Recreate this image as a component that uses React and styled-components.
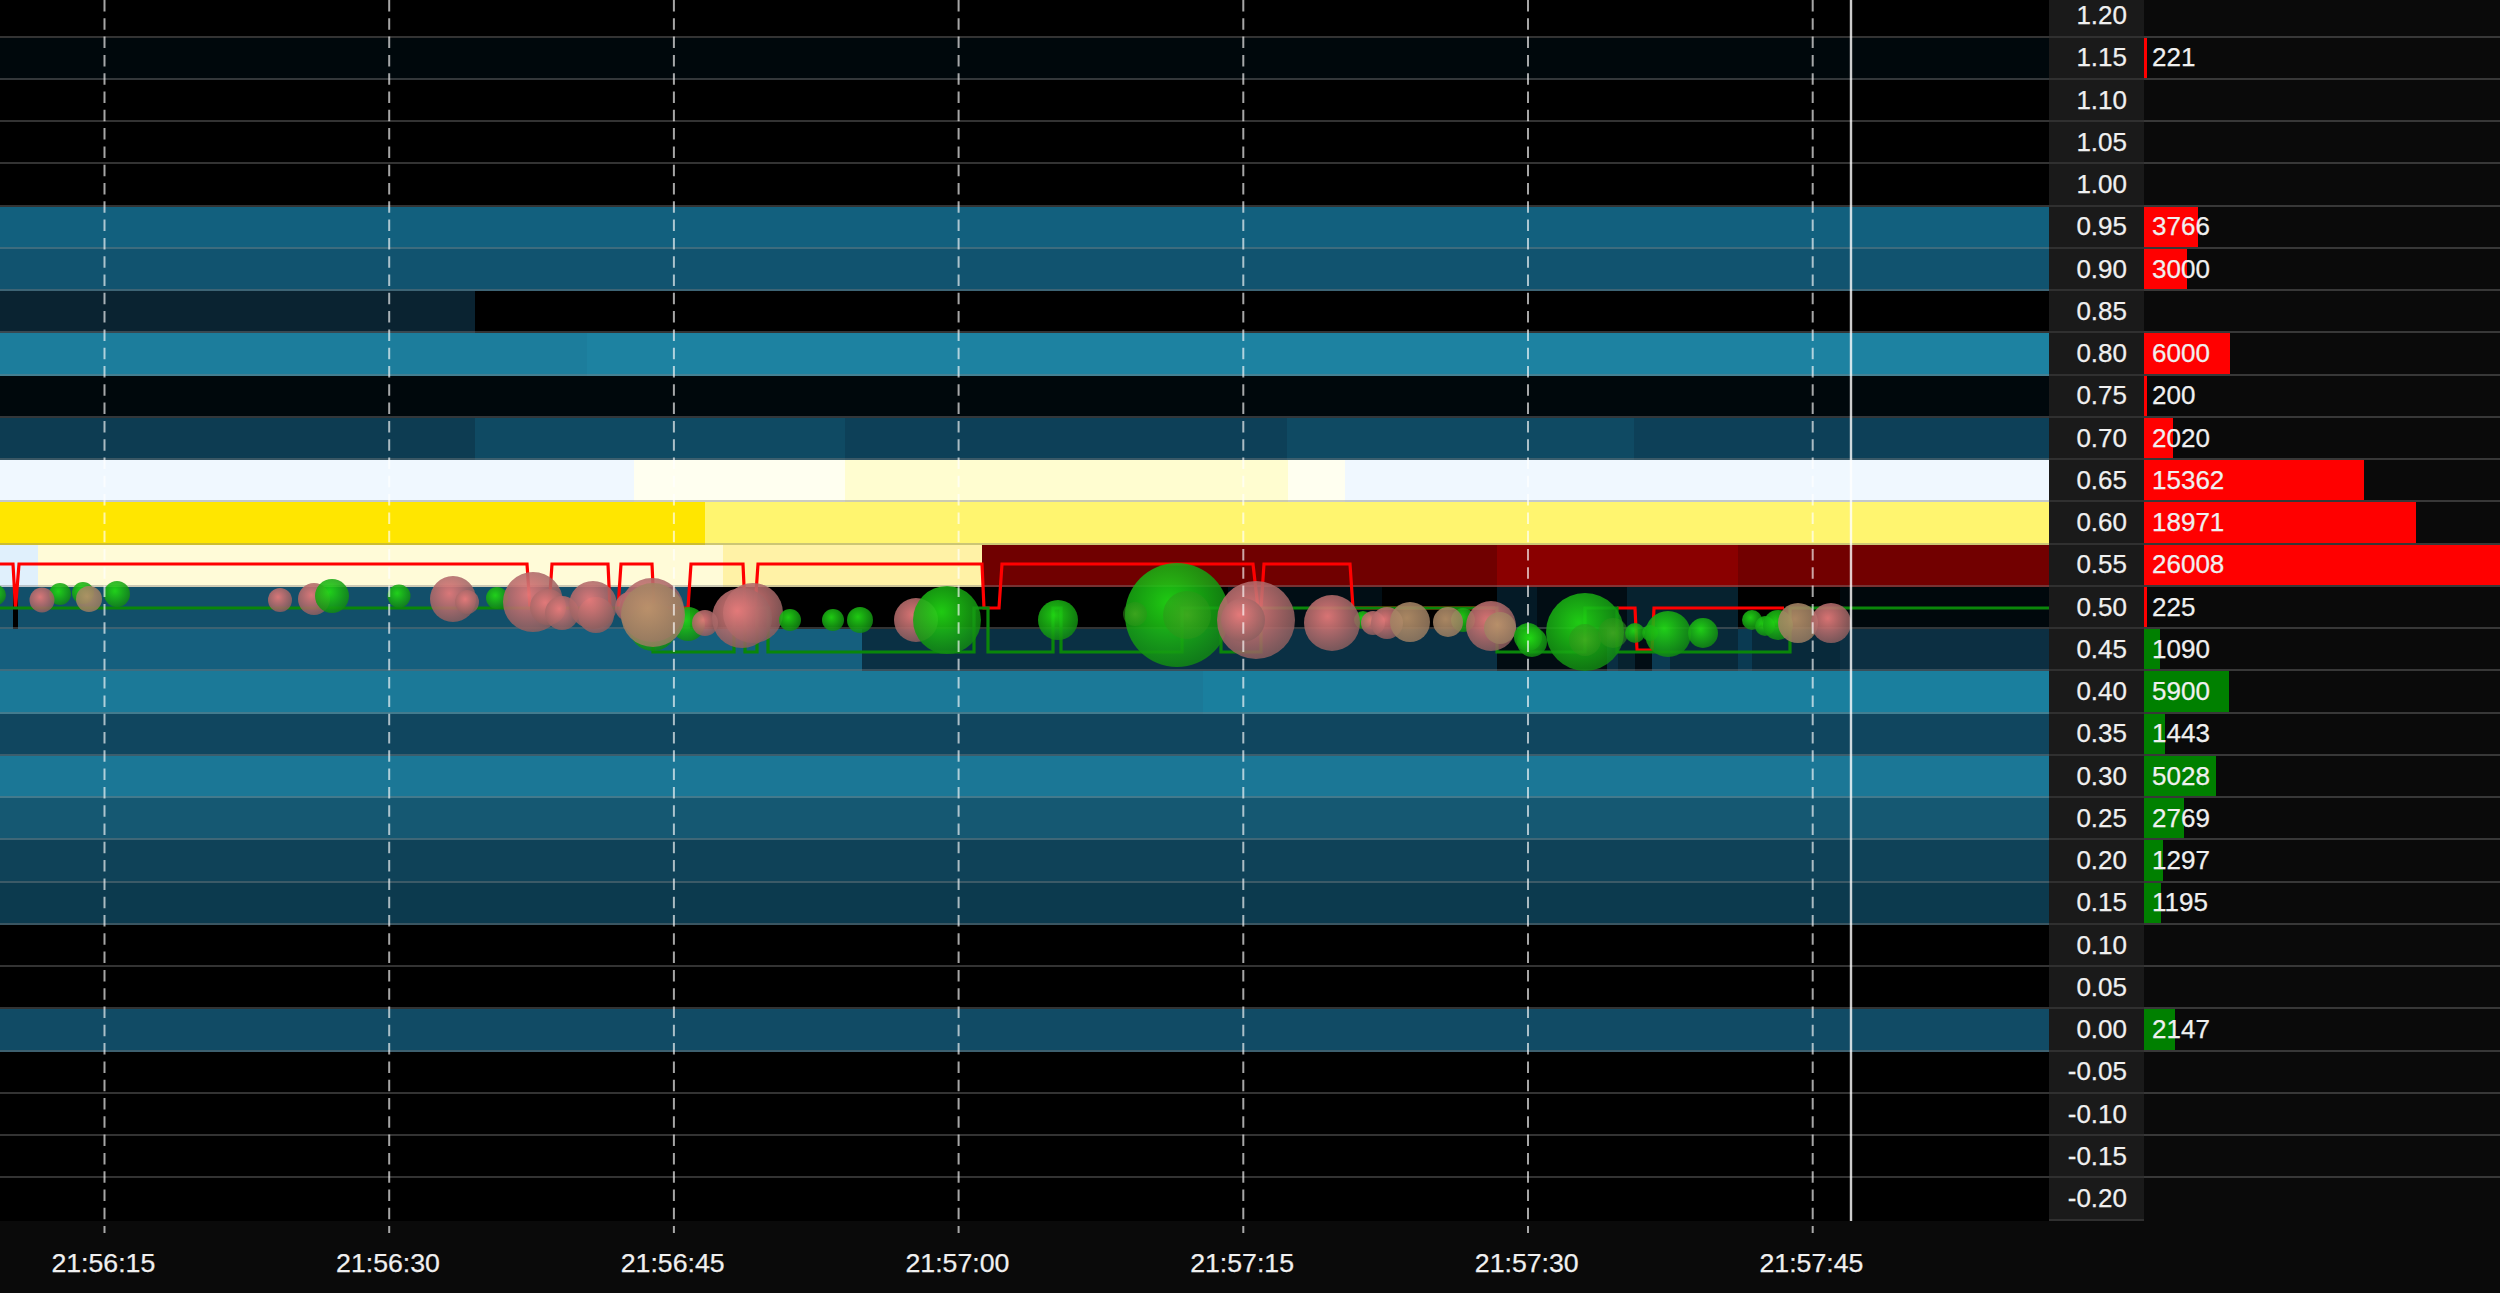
import React from 'react';
import styled, { createGlobalStyle } from 'styled-components';

const CHART_WIDTH = 2049;
const BAR_SCALE = 0.01433;
const TICKS = ['21:56:15', '21:56:30', '21:56:45', '21:57:00', '21:57:15', '21:57:30', '21:57:45'];
const TICK_X = TICKS.map((_, i) => 104.5 + i * 284.7);

// each level: price, traded volume, side, heat segments as [end x, colour]
const LEVELS = [
    { price: '1.20', heat: [[CHART_WIDTH, '#000']] },
    { price: '1.15', vol: 221, side: 'ask', heat: [[CHART_WIDTH, '#00080c']] },
    { price: '1.10', heat: [[CHART_WIDTH, '#000']] },
    { price: '1.05', heat: [[CHART_WIDTH, '#000']] },
    { price: '1.00', heat: [[CHART_WIDTH, '#000']] },
    { price: '0.95', vol: 3766, side: 'ask', heat: [[CHART_WIDTH, '#12607e']] },
    { price: '0.90', vol: 3000, side: 'ask', heat: [[CHART_WIDTH, '#11536f']] },
    { price: '0.85', heat: [[475, '#0a2331'], [CHART_WIDTH, '#000']] },
    { price: '0.80', vol: 6000, side: 'ask', heat: [[587, '#1c7d9c'], [CHART_WIDTH, '#1d82a1']] },
    { price: '0.75', vol: 200, side: 'ask', heat: [[CHART_WIDTH, '#00080c']] },
    { price: '0.70', vol: 2020, side: 'ask', heat: [[475, '#0d3c52'], [845, '#0f4a63'], [1287, '#0d4058'], [1634, '#0f4a63'], [CHART_WIDTH, '#0d4058']] },
    { price: '0.65', vol: 15362, side: 'ask', heat: [[634, '#f0f8ff'], [845, '#fffff0'], [1288, '#fffdd0'], [1345, '#fffff0'], [CHART_WIDTH, '#f0f8ff']] },
    { price: '0.60', vol: 18971, side: 'ask', heat: [[705, '#ffe600'], [CHART_WIDTH, '#fff56f']] },
    { price: '0.55', vol: 26008, side: 'ask', heat: [[38, '#e0f0fc'], [723, '#fffbd8'], [982, '#fff2a6'], [1497, '#700000'], [1738, '#8a0000'], [CHART_WIDTH, '#720000']] },
    { price: '0.50', vol: 225, side: 'ask', heat: [[13, '#124f6a'], [18, '#000'], [690, '#124f6a'], [1228, '#000'], [1382, '#010e15'], [1497, '#000'], [1537, '#041a26'], [1627, '#020d14'], [1738, '#06222f'], [1840, '#000'], [CHART_WIDTH, '#00080c']] },
    { price: '0.45', vol: 1090, side: 'bid', heat: [[862, '#155f7e'], [1497, '#0a3044'], [1607, '#020c12'], [1618, '#0a2e42'], [1635, '#07222f'], [1652, '#020d14'], [1670, '#0b3a52'], [1738, '#08293a'], [1752, '#0a3a52'], [1840, '#08293a'], [CHART_WIDTH, '#0c2f42']] },
    { price: '0.40', vol: 5900, side: 'bid', heat: [[1203, '#1b7998'], [CHART_WIDTH, '#1a7f9e']] },
    { price: '0.35', vol: 1443, side: 'bid', heat: [[CHART_WIDTH, '#10465f']] },
    { price: '0.30', vol: 5028, side: 'bid', heat: [[CHART_WIDTH, '#1b7796']] },
    { price: '0.25', vol: 2769, side: 'bid', heat: [[CHART_WIDTH, '#155872']] },
    { price: '0.20', vol: 1297, side: 'bid', heat: [[CHART_WIDTH, '#0f4258']] },
    { price: '0.15', vol: 1195, side: 'bid', heat: [[CHART_WIDTH, '#0c3a4e']] },
    { price: '0.10', heat: [[CHART_WIDTH, '#000']] },
    { price: '0.05', heat: [[CHART_WIDTH, '#000']] },
    { price: '0.00', vol: 2147, side: 'bid', heat: [[CHART_WIDTH, '#114b65']] },
    { price: '-0.05', heat: [[CHART_WIDTH, '#000']] },
    { price: '-0.10', heat: [[CHART_WIDTH, '#000']] },
    { price: '-0.15', heat: [[CHART_WIDTH, '#000']] },
    { price: '-0.20', heat: [[CHART_WIDTH, '#000']] },
];

const RED_LINE = 'M0 564H13L15.5 608L19 564H527L530 608H549L552 564H608L610 608H618L621 564H652L654 608H688L691 564H743L745 608H755L758 564H982L984 608H999L1002 564H1253L1258 608H1261L1264 564H1350L1353 608H1495M1617 608H1635L1637 650H1652L1654 608H1784';
const GREEN_LINE = 'M0 608H653V652H734V608H745V652H757V608H768V652H974V608H988V652H1053V608H1061V652H1182V608H1221V652H1261V608H1497V652H1585V608H1617V652H1790V608H2049';

// g = buy trade, p = sell trade, t = both at the same moment
const BUBBLES = [
    ['g', -4, 595, 10], ['g', 60, 594, 11], ['g', 83, 593, 11], ['p', 42, 600, 12.5], ['t', 89, 599, 13], ['g', 117, 594, 13],
    ['p', 280, 600, 12], ['p', 314, 599, 16], ['g', 332, 596, 17], ['g', 399, 596, 11.5], ['p', 453, 599, 23], ['p', 467, 602, 12],
    ['g', 497, 598, 11], ['p', 533, 602, 30], ['p', 548, 607, 18], ['p', 562, 613, 17], ['p', 596, 615, 18], ['p', 593, 605, 24],
    ['p', 630, 607, 15], ['g', 688, 624, 17], ['g', 653, 627, 24], ['p', 652, 610, 32], ['t', 653, 615, 32], ['p', 705, 623, 13],
    ['p', 753, 613, 30], ['p', 742, 618, 30], ['g', 790, 620, 11], ['g', 833, 620, 11], ['g', 860, 620, 13], ['p', 916, 620, 22],
    ['g', 947, 620, 34], ['g', 1058, 620, 20], ['g', 1177, 615, 52], ['l', 1187, 615, 24], ['l', 1135, 614, 12], ['p', 1256, 620, 39],
    ['p', 1243, 620, 22], ['g', 1363, 620, 9], ['p', 1332, 623, 28], ['p', 1373, 623, 12], ['p', 1387, 623, 16], ['t', 1410, 622, 20],
    ['g', 1463, 620, 12], ['t', 1448, 622, 15], ['p', 1491, 626, 25], ['t', 1500, 628, 16], ['g', 1528, 637, 14], ['g', 1532, 642, 15],
    ['g', 1585, 632, 39], ['l', 1585, 640, 16], ['l', 1613, 633, 15], ['g', 1635, 633, 10], ['g', 1650, 633, 8], ['g', 1668, 634, 23],
    ['g', 1703, 633, 15], ['g', 1752, 620, 10], ['g', 1765, 626, 10], ['g', 1778, 625, 15], ['t', 1798, 623, 20], ['p', 1831, 623, 20],
];

const OrderFlow = () => {
    return (
        <Overlay width={CHART_WIDTH} height={1233} viewBox={`0 0 ${CHART_WIDTH} 1233`}>
            <defs>
                <radialGradient id="g" cx="42%" cy="38%" r="62%">
                    <stop offset="0%" stopColor="#22dc14" stopOpacity="0.92" />
                    <stop offset="100%" stopColor="#128a12" stopOpacity="0.84" />
                </radialGradient>
                <radialGradient id="l" cx="50%" cy="50%" r="55%">
                    <stop offset="0%" stopColor="#48a822" stopOpacity="0.75" />
                    <stop offset="100%" stopColor="#2a9418" stopOpacity="0.5" />
                </radialGradient>
                <radialGradient id="p" cx="42%" cy="38%" r="62%">
                    <stop offset="0%" stopColor="#e67a7a" stopOpacity="0.94" />
                    <stop offset="100%" stopColor="#8e5f5f" stopOpacity="0.84" />
                </radialGradient>
                <radialGradient id="t" cx="42%" cy="40%" r="62%">
                    <stop offset="0%" stopColor="#b8926a" stopOpacity="0.92" />
                    <stop offset="100%" stopColor="#967a60" stopOpacity="0.86" />
                </radialGradient>
            </defs>
            <path d={RED_LINE} fill="none" stroke="#f00" strokeWidth="3.2" />
            <path d={GREEN_LINE} fill="none" stroke="#0a860a" strokeWidth="3.2" />
            {BUBBLES.map(([kind, cx, cy, r], i) => (
                <circle key={i} cx={cx} cy={cy} r={r} fill={`url(#${kind})`} />
            ))}
            {TICK_X.map(x => (
                <line key={x} x1={x} x2={x} y1="0" y2="1233" stroke="rgba(255,255,255,.65)" strokeWidth="2" strokeDasharray="11.5 6.8" />
            ))}
            <line x1="1851" x2="1851" y1="0" y2="1221" stroke="rgba(255,255,255,.8)" strokeWidth="2.4" />
        </Overlay>
    );
};

const App = () => {
    return (
        <Board>
            <GlobalStyle />
            <Column>
                <Rows>
                    {LEVELS.map(level => (
                        <HeatRow key={level.price}>
                            {level.heat.map(([end, color], i) => (
                                <HeatCell key={end} $width={end - (i ? level.heat[i - 1][0] : 0)} $color={color} />
                            ))}
                        </HeatRow>
                    ))}
                </Rows>
            </Column>
            <Column>
                <Rows>
                    {LEVELS.map(level => (
                        <PriceRow key={level.price}>{level.price}</PriceRow>
                    ))}
                </Rows>
            </Column>
            <Column>
                <Rows>
                    {LEVELS.map(level => (
                        <VolumeRow key={level.price}>
                            {level.vol && <VolumeBar $side={level.side} style={{ width: level.vol * BAR_SCALE }} />}
                            {level.vol && <VolumeText>{level.vol}</VolumeText>}
                        </VolumeRow>
                    ))}
                </Rows>
            </Column>
            <TimeAxis>
                {TICKS.map(tick => (
                    <TimeLabel key={tick}>{tick}</TimeLabel>
                ))}
            </TimeAxis>
            <OrderFlow />
        </Board>
    );
};

const GlobalStyle = createGlobalStyle`
    html, body {
        margin: 0;
        background: #0a0a0a;
        overflow: hidden;
    }
`;

const Board = styled.div`
    position: relative;
    display: grid;
    grid-template-columns: 2049px 95px 356px;
    grid-template-rows: 1221px 72px;
    width: 2500px;
    height: 1293px;
    overflow: hidden;
    background: #0a0a0a;
    color: #f0f0f0;
    font-family: "Liberation Sans", Arial, sans-serif;
    font-size: 26px;
    -webkit-text-stroke: 0.25px #f0f0f0;
`;

const Column = styled.div`
    overflow: hidden;
`;

const Rows = styled.div`
    display: grid;
    grid-auto-rows: 42.25px;
    margin-top: -4.55px;
`;

const HeatRow = styled.div`
    display: flex;
`;

const HeatCell = styled.div`
    flex: 0 0 ${({ $width }) => $width}px;
    background: ${({ $color }) => $color};
    border-bottom: 2px solid rgba(128, 128, 128, 0.4);
    ${HeatRow}:last-child & {
        border-bottom: none;
    }
`;

const PriceRow = styled.div`
    display: flex;
    align-items: center;
    justify-content: flex-end;
    padding-right: 17px;
    background: #1a1a1a;
    border-bottom: 2px solid #303030;
`;

const VolumeRow = styled.div`
    position: relative;
    display: flex;
    align-items: center;
    padding-left: 8px;
    border-bottom: 2px solid #383838;
    &:last-child {
        border-bottom: none;
    }
`;

const VolumeBar = styled.div`
    position: absolute;
    top: 0;
    bottom: 0;
    left: 0;
    background: ${({ $side }) => ($side === 'ask' ? '#f00' : '#008000')};
`;

const VolumeText = styled.span`
    position: relative;
`;

const TimeAxis = styled.div`
    grid-column: 1 / -1;
    display: flex;
    margin-left: -39px;
    padding-top: 27px;
    font-size: 26.7px;
`;

const TimeLabel = styled.div`
    flex: 0 0 284.7px;
    text-align: center;
`;

const Overlay = styled.svg`
    position: absolute;
    top: 0;
    left: 0;
    pointer-events: none;
`;

export default App;
